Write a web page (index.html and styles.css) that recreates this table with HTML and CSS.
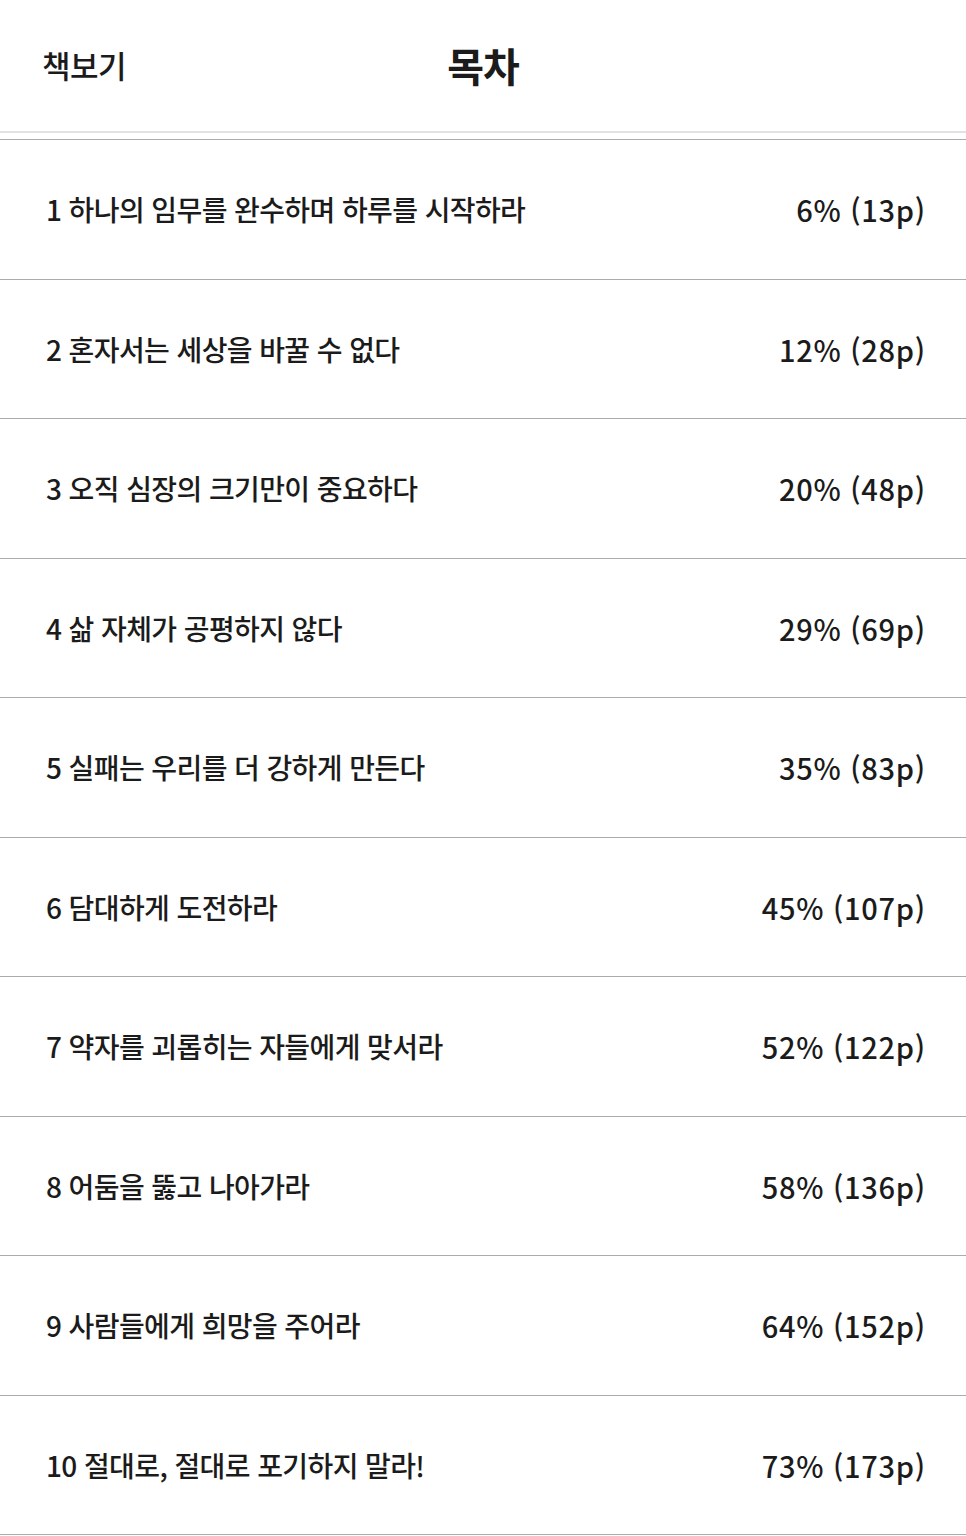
FILE: index.html
```html
<!DOCTYPE html>
<html lang="ko">
<head>
<meta charset="utf-8">
<title>목차</title>
<link rel="stylesheet" href="styles.css">
</head>
<body>
<header class="topbar">
  <div class="back">책보기</div>
  <h1 class="title">목차</h1>
</header>
<div class="divider"></div>
<ul class="toc">
  <li class="row"><span class="name">1 하나의 임무를 완수하며 하루를 시작하라</span><span class="pos">6% (13p)</span></li>
  <li class="row"><span class="name">2 혼자서는 세상을 바꿀 수 없다</span><span class="pos">12% (28p)</span></li>
  <li class="row"><span class="name">3 오직 심장의 크기만이 중요하다</span><span class="pos">20% (48p)</span></li>
  <li class="row"><span class="name">4 삶 자체가 공평하지 않다</span><span class="pos">29% (69p)</span></li>
  <li class="row"><span class="name">5 실패는 우리를 더 강하게 만든다</span><span class="pos">35% (83p)</span></li>
  <li class="row"><span class="name">6 담대하게 도전하라</span><span class="pos">45% (107p)</span></li>
  <li class="row"><span class="name">7 약자를 괴롭히는 자들에게 맞서라</span><span class="pos">52% (122p)</span></li>
  <li class="row"><span class="name">8 어둠을 뚫고 나아가라</span><span class="pos">58% (136p)</span></li>
  <li class="row"><span class="name">9 사람들에게 희망을 주어라</span><span class="pos">64% (152p)</span></li>
  <li class="row"><span class="name">10 절대로, 절대로 포기하지 말라!</span><span class="pos">73% (173p)</span></li>
</ul>
</body>
</html>
```
FILE: styles.css
```css
* { box-sizing: border-box; }
html, body {
  margin: 0;
  padding: 0;
  background: #ffffff;
  color: #1b1b1b;
  font-family: "Noto Sans CJK KR", "Noto Sans", sans-serif;
}
.topbar {
  height: 133px;
  border-bottom: 2px solid #e2e2e2;
  display: grid;
  grid-template-columns: 1fr auto 1fr;
  align-items: center;
  padding: 0 42px;
}
.back {
  font-size: 31px;
  font-weight: 500;
  letter-spacing: -0.5px;
  padding-bottom: 2px;
}
.title {
  margin: 0;
  font-size: 40px;
  font-weight: 700;
  letter-spacing: -1px;
  padding-bottom: 2px;
}
.divider {
  height: 7px;
  border-bottom: 1px solid #ababab;
}
.toc {
  list-style: none;
  margin: 0;
  padding: 0;
}
.row {
  height: 139.5px;
  border-bottom: 1px solid #ababab;
  display: flex;
  align-items: center;
  justify-content: space-between;
  padding: 0 41px 0 46px;
  font-size: 28px;
  font-weight: 500;
  letter-spacing: -0.6px;
}
.name, .pos { white-space: nowrap; }
.pos {
  font-size: 29px;
  letter-spacing: 0.7px;
  margin-right: -0.7px;
}
```
